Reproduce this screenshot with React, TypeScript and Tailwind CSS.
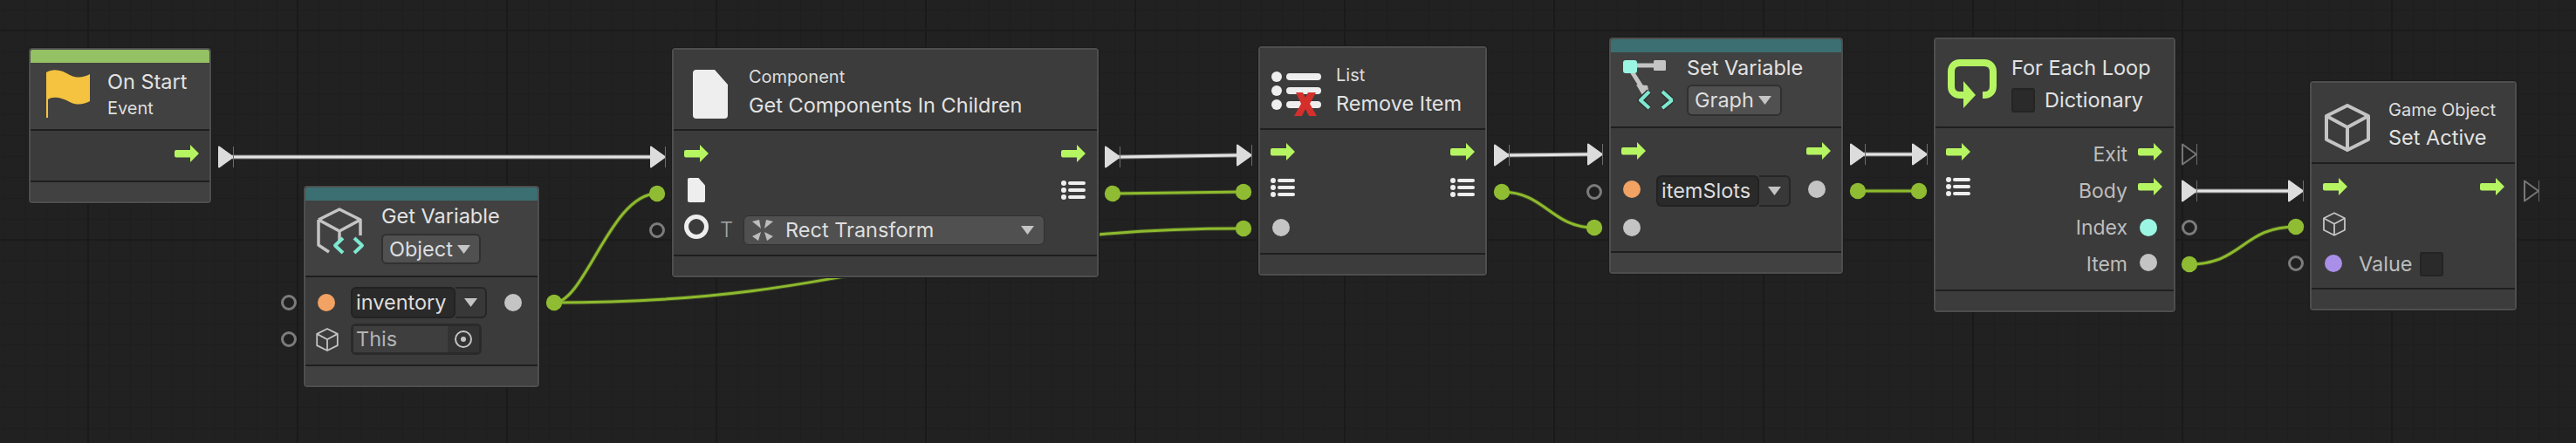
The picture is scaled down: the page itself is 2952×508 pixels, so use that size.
import React from 'react';

const ARROW = '#b6f562';

const ArrowIcon = ({ className = '' }: { className?: string }) => (
  <svg width="28" height="20" viewBox="0 0 28 20" className={`shrink-0 ${className}`}>
    <path d="M2 6 H18 V0 L28 10 L18 20 V14.5 H2 Q0 14.5 0 12.5 V8 Q0 6 2 6 Z" fill={ARROW} />
  </svg>
);

const ListIcon = ({ className = '' }: { className?: string }) => (
  <svg width="28" height="22" viewBox="0 0 28 22" className={`shrink-0 ${className}`} fill="#eeeeee">
    <circle cx="3" cy="3" r="3" />
    <circle cx="3" cy="11" r="3" />
    <circle cx="3" cy="19" r="3" />
    <rect x="8" y="1" width="20" height="4" rx="2" />
    <rect x="8" y="9" width="20" height="4" rx="2" />
    <rect x="8" y="17" width="20" height="4" rx="2" />
  </svg>
);

const DocIcon = ({ size = 'big', className = '' }: { size?: 'big' | 'small'; className?: string }) => (
  <svg
    width={size === 'big' ? 40 : 20}
    height={size === 'big' ? 56 : 28}
    viewBox="0 0 40 56"
    className={`shrink-0 ${className}`}
  >
    <path d="M4 0 H25 L40 17 V52 Q40 56 36 56 H4 Q0 56 0 52 V4 Q0 0 4 0 Z" fill="#eeeeee" />
  </svg>
);

const CubeIcon = ({ w, h, sw, className = '' }: { w: number; h: number; sw: number; className?: string }) => (
  <svg width={w} height={h} viewBox="0 0 52 55" className={`shrink-0 ${className}`} fill="none" stroke="#c4c4c4" strokeWidth={sw} strokeLinejoin="round">
    <path d="M26 2 L50 14 V41 L26 53 L2 41 V14 Z" />
    <path d="M2 14 L26 27 L50 14 M26 27 V53" />
  </svg>
);

const Dot = ({ color = 'bg-[#c4c4c4]', className = '' }: { color?: string; className?: string }) => (
  <div className={`w-[20px] h-[20px] rounded-full shrink-0 ${color} ${className}`} />
);

const Caret = ({ className = '' }: { className?: string }) => (
  <svg width="15" height="10" viewBox="0 0 15 10" className={`shrink-0 ${className}`}>
    <path d="M0 0 H15 L7.5 10 Z" fill="#c4c4c4" />
  </svg>
);

const Checkbox = ({ className = '' }: { className?: string }) => (
  <div className={`w-[27px] h-[28px] rounded-[3px] bg-[#2a2a2a] border-2 border-[#242424] shrink-0 ${className}`} />
);

const Dropdown = ({ label, className = '' }: { label: string; className?: string }) => (
  <div className={`flex items-center justify-between h-[35px] pl-[7px] pr-[10px] bg-[#505050] border-2 border-[#303030] rounded-[6px] text-[23.5px] text-[#dedede] ${className}`}>
    {label}
    <Caret />
  </div>
);

const VariableField = ({ label, className = '' }: { label: string; className?: string }) => (
  <div className={`flex h-[36px] shrink-0 ${className}`}>
    <div className="flex-1 flex items-center pl-[4px] bg-[#2a2a2a] border-2 border-[#222222] rounded-[6px] text-[23.5px] text-[#dddddd] pb-[1px]">{label}</div>
    <div className="w-[36px] flex items-center justify-center bg-[#383838] border-2 border-l-0 border-[#262626] rounded-r-[6px]">
      <Caret />
    </div>
  </div>
);

const Row = ({ children, className = '' }: { children: React.ReactNode; className?: string }) => (
  <div className={`flex items-center h-[42px] ${className}`}>{children}</div>
);

type NodeProps = {
  pos: string;
  bar?: string;
  headerClass: string;
  bodyClass: string;
  footTone?: string;
  header: React.ReactNode;
  children: React.ReactNode;
};

const GraphNode = ({ pos, bar, headerClass, bodyClass, footTone = 'bg-[#3c3c3c]', header, children }: NodeProps) => (
  <div className={`absolute flex flex-col rounded-[4px] border-2 border-[#4e4e4e] shadow-[0_0_0_1px_#1b1b1b] overflow-hidden ${pos}`}>
    {bar && <div className={`h-[15px] shrink-0 ${bar}`} />}
    <div className={`flex items-center shrink-0 ${footTone} ${headerClass}`}>{header}</div>
    <div className={`flex-1 border-y-2 border-[#1f1f1f] bg-[#3b3b3b] ${bodyClass}`}>{children}</div>
    <div className={`h-[22px] shrink-0 ${footTone}`} />
  </div>
);

const Title = ({ children }: { children: React.ReactNode }) => (
  <div className="text-[23.5px] leading-[26px] text-[#e2e2e2] whitespace-nowrap">{children}</div>
);

const Sub = ({ children, className = '' }: { children: React.ReactNode; className?: string }) => (
  <div className={`text-[20px] leading-[24px] text-[#dedede] whitespace-nowrap ${className}`}>{children}</div>
);

const Label = ({ children }: { children: React.ReactNode }) => (
  <span className="text-[23px] text-[#bdbdbd] whitespace-nowrap">{children}</span>
);

// canvas ports and wires, everything here sits behind the nodes
const Flow = ({ x, y, on }: { x: number; y: number; on: boolean }) => (
  <g>
    <path
      d={`M${x + 1} ${y - 11.5} L${x + 17} ${y} L${x + 1} ${y + 11.5} Z`}
      fill={on ? '#dcdcdc' : '#202020'}
      stroke={on ? '#dcdcdc' : '#777777'}
      strokeWidth="2"
      strokeLinejoin="round"
    />
    <path d={`M${x + 17.5} ${y - 12} V${y + 12}`} stroke="#6c6c6c" strokeWidth="1" />
  </g>
);

const Hollow = ({ x, y }: { x: number; y: number }) => (
  <circle cx={x} cy={y} r="7.5" fill="#202020" stroke="#7c7c7c" strokeWidth="3" />
);

const Filled = ({ x, y }: { x: number; y: number }) => (
  <circle cx={x} cy={y} r="9.2" fill="#8fbc33" />
);

const Wire = ({ d }: { d: string }) => (
  <g fill="none">
    <path d={d} stroke="#8fbc33" strokeOpacity="0.25" strokeWidth="5" />
    <path d={d} stroke="#8ebb2e" strokeWidth="3" />
  </g>
);

const FlowWire = ({ x1, x2, y1, y2 }: { x1: number; x2: number; y1: number; y2: number }) => (
  <g fill="none">
    <path d={`M${x1} ${y1} L${x2} ${y2}`} stroke="#777777" strokeWidth="5" />
    <path d={`M${x1} ${y1} L${x2} ${y2}`} stroke="#e4e4e4" strokeWidth="3" />
  </g>
);

const Canvas = () => (
  <svg width="2952" height="508" viewBox="0 0 2952 508" className="absolute left-0 top-0">
    <Wire d="M635 347 C670 347 700 222 753 222" />
    <Wire d="M635 347 C1000 347 1060 262 1425 262" />
    <Wire d="M1275 222 L1425 220" />
    <Wire d="M1721 220 C1770 220 1778 261 1827 261" />
    <Wire d="M2129 219 L2199 219" />
    <Wire d="M2509 303 C2570 303 2570 260 2631 260" />

    <FlowWire x1={266} x2={746} y1={180} y2={180} />
    <FlowWire x1={1282} x2={1418} y1={180} y2={178} />
    <FlowWire x1={1728} x2={1820} y1={178} y2={177} />
    <FlowWire x1={2136} x2={2192} y1={177} y2={177} />
    <FlowWire x1={2516} x2={2624} y1={219} y2={219} />

    <Flow x={250} y={180} on />
    <Flow x={745} y={180} on />
    <Flow x={1266} y={180} on />
    <Flow x={1417} y={178} on />
    <Flow x={1712} y={178} on />
    <Flow x={1819} y={177} on />
    <Flow x={2120} y={177} on />
    <Flow x={2191} y={177} on />
    <Flow x={2500} y={177} on={false} />
    <Flow x={2500} y={219} on />
    <Flow x={2622} y={219} on />
    <Flow x={2892} y={219} on={false} />

    <Hollow x={331} y={347} />
    <Hollow x={331} y={389} />
    <Filled x={635} y={347} />
    <Filled x={753} y={222} />
    <Hollow x={753} y={264} />
    <Filled x={1275} y={222} />
    <Filled x={1425} y={220} />
    <Filled x={1425} y={262} />
    <Filled x={1721} y={220} />
    <Hollow x={1827} y={220} />
    <Filled x={1827} y={261} />
    <Filled x={2129} y={219} />
    <Filled x={2199} y={219} />
    <Hollow x={2509} y={261} />
    <Filled x={2509} y={303} />
    <Filled x={2631} y={260} />
    <Hollow x={2631} y={302} />
  </svg>
);

const App: React.FC = () => {
  return (
    <div className="relative w-[2952px] h-[508px] overflow-hidden bg-[#212121] font-['Inter',sans-serif] [background-image:linear-gradient(#1b1b1b_2px,transparent_2px),linear-gradient(90deg,#1a1a1a_2px,transparent_2px),linear-gradient(#1e1e1e_1px,transparent_1px),linear-gradient(90deg,#1e1e1e_1px,transparent_1px)] [background-size:240px_240px,240px_240px,24px_24px,24px_24px] [background-position:0_34px,100px_0,0_11px,5px_0]">
      <Canvas />

      {/* On Start */}
      <GraphNode
        pos="left-[33px] top-[55px] w-[209px] h-[178px]"
        bar="bg-[#93c163]"
        footTone="bg-[#414141]"
        headerClass="h-[76px] pl-[18px] gap-[20px]"
        bodyClass="flex justify-end pr-[12px] pt-[16px]"
        header={
          <>
            <svg width="50" height="55" viewBox="0 0 50 55" className="shrink-0 mb-[5px]">
              <path d="M0 3 C8 -2 18 0 27 6 C35 10 43 9 50 5 V36 C43 40 35 41 27 37 C18 32 8 30 2 34 V55 H0 Z" fill="#f5c33f" />
            </svg>
            <div className="flex flex-col gap-[5px] pb-[4px]">
              <Title>On Start</Title>
              <Sub>Event</Sub>
            </div>
          </>
        }
      >
        <ArrowIcon />
      </GraphNode>

      {/* Get Variable */}
      <GraphNode
        pos="left-[348px] top-[213px] w-[270px] h-[231px]"
        bar="bg-[#3b6f72]"
        footTone="bg-[#414141]"
        headerClass="h-[86px] pl-[12px] gap-[15px]"
        bodyClass="flex flex-col gap-[6px] pt-[11px] pl-[14px]"
        header={
          <>
            <svg width="60" height="58" viewBox="0 0 60 58" className="shrink-0 mb-[14px]" fill="none" strokeLinejoin="round">
              <g stroke="#c4c4c4" strokeWidth="3.5">
                <path d="M3 15 L27 3 L51 15 V33 M3 15 V44 L15 52 M3 15 L27 28 L51 15 M27 28 V40" />
              </g>
              <g stroke="#7de8d0" strokeWidth="4">
                <path d="M31 36 L22 44.5 L31 53 M44 36 L53 44.5 L44 53" />
              </g>
            </svg>
            <div className="flex flex-col items-start gap-[7px] pb-[8px]">
              <Title>Get Variable</Title>
              <Dropdown label="Object" className="w-[114px]" />
            </div>
          </>
        }
      >
        <div className="flex items-center">
          <Dot color="bg-[#f2a263]" />
          <VariableField label="inventory" className="w-[156px] ml-[18px]" />
          <Dot className="ml-[20px]" />
        </div>
        <div className="flex items-center">
          <CubeIcon w={26} h={27} sw={3.6} className="-ml-[2px] mr-[14px]" />
          <div className="flex w-[150px] h-[36px] bg-[#2a2a2a] border-[3px] border-[#2a2a2a] rounded-[6px]">
            <div className="flex-1 flex items-center pl-[3px] bg-[#3e3e3e] text-[23.5px] text-[#b4b4b4]">This</div>
            <div className="w-[36px] flex items-center justify-center bg-[#333333]">
              <svg width="22" height="22" viewBox="0 0 22 22" fill="none">
                <circle cx="11" cy="11" r="9" stroke="#c4c4c4" strokeWidth="2" />
                <circle cx="11" cy="11" r="3" fill="#c4c4c4" />
              </svg>
            </div>
          </div>
        </div>
      </GraphNode>

      {/* Get Components In Children */}
      <GraphNode
        pos="left-[770px] top-[55px] w-[489px] h-[263px]"
        headerClass="h-[91px] pl-[22px] gap-[24px]"
        bodyClass="pt-[9px] pl-[12px] pr-[13px]"
        header={
          <>
            <DocIcon className="mt-[11px]" />
            <div className="flex flex-col gap-[8px] pt-[4px]">
              <Sub>Component</Sub>
              <Title>Get Components In Children</Title>
            </div>
          </>
        }
      >
        <Row className="justify-between">
          <ArrowIcon className="mb-[8px]" />
          <ArrowIcon className="mb-[8px]" />
        </Row>
        <Row className="justify-between">
          <DocIcon size="small" className="ml-[4px] mb-[8px]" />
          <ListIcon className="mb-[8px]" />
        </Row>
        <Row>
          <svg width="28" height="28" viewBox="0 0 28 28" className="shrink-0 mb-[8px]" fill="none">
            <circle cx="14" cy="14" r="11.5" stroke="#eeeeee" strokeWidth="5" />
          </svg>
          <span className="ml-[13px] w-[14px] text-[24px] font-light text-[#a4a4a4]">T</span>
          <div className="flex items-center ml-[13px] w-[345px] h-[34px] pl-[8px] pr-[11px] bg-[#505050] border border-[#303030] rounded-[6px] text-[23.5px] text-[#dedede]">
            <svg width="26" height="26" viewBox="0 0 26 26" className="shrink-0 mr-[13px]" fill="#bdbdbd">
              <path d="M1 3 L9 1 L11 11 Z M25 3 L17 1 L15 11 Z" />
              <path d="M1 20 L11 15 L8 25 Z M25 20 L15 15 L18 25 Z" />
            </svg>
            Rect Transform
            <Caret className="ml-auto" />
          </div>
        </Row>
      </GraphNode>

      {/* Remove Item */}
      <GraphNode
        pos="left-[1442px] top-[53px] w-[262px] h-[263px]"
        headerClass="h-[92px] pl-[13px] gap-[17px]"
        bodyClass="pt-[8px] pl-[12px] pr-[12px]"
        header={
          <>
            <svg width="57" height="51" viewBox="0 0 57 51" className="shrink-0 mt-[13px]">
              <g fill="#eeeeee">
                <circle cx="6" cy="6" r="6" />
                <circle cx="6" cy="22" r="6" />
                <circle cx="6" cy="38" r="6" />
                <rect x="17" y="2" width="40" height="8" rx="4" />
                <rect x="17" y="18" width="40" height="8" rx="4" />
                <rect x="17" y="34" width="40" height="8" rx="4" />
              </g>
              <path d="M28 24 H36 L39 30 L42 24 H51 L44 37 L52 51 H43 L39 43 L35 51 H26 L34 37 Z" fill="#d42f2a" />
            </svg>
            <div className="flex flex-col gap-[8px] pt-[3px]">
              <Sub>List</Sub>
              <Title>Remove Item</Title>
            </div>
          </>
        }
      >
        <Row className="justify-between">
          <ArrowIcon className="mb-[8px]" />
          <ArrowIcon className="mb-[8px]" />
        </Row>
        <Row className="justify-between">
          <ListIcon className="mb-[10px]" />
          <ListIcon className="mb-[10px]" />
        </Row>
        <Row>
          <Dot className="ml-[2px] mb-[2px]" />
        </Row>
      </GraphNode>

      {/* Set Variable */}
      <GraphNode
        pos="left-[1844px] top-[43px] w-[268px] h-[271px]"
        bar="bg-[#3b6f72]"
        footTone="bg-[#414141]"
        headerClass="h-[85px] pl-[11px] gap-[16px]"
        bodyClass="pt-[9px] pl-[12px] pr-[12px]"
        header={
          <>
            <svg width="60" height="60" viewBox="0 0 60 60" className="shrink-0 mb-[11px]" fill="none">
              <path d="M11 8 H40 M11 12 L25 34" stroke="#c4c4c4" strokeWidth="5" />
              <rect x="38" y="2" width="14" height="12" rx="1.5" fill="#c4c4c4" />
              <path d="M18 30 L31 31 L32 36 L25 42 Z" fill="#c4c4c4" />
              <rect x="3" y="2" width="16" height="15" rx="3" fill="#9af5e2" />
              <path d="M33 38 L23 48 L33 57 M48 38 L59 48 L48 57" stroke="#323232" strokeWidth="7" strokeLinejoin="round" />
              <path d="M33 38 L23 48 L33 57 M48 38 L59 48 L48 57" stroke="#7de8d0" strokeWidth="4" strokeLinejoin="round" />
            </svg>
            <div className="flex flex-col items-start gap-[6px] pb-[7px]">
              <Title>Set Variable</Title>
              <Dropdown label="Graph" className="h-[36px] w-[109px]" />
            </div>
          </>
        }
      >
        <Row className="justify-between">
          <ArrowIcon className="mb-[8px]" />
          <ArrowIcon className="mb-[8px]" />
        </Row>
        <Row className="pl-[2px]">
          <Dot color="bg-[#f2a263]" className="mb-[4px]" />
          <VariableField label="itemSlots" className="w-[154px] ml-[18px]" />
          <Dot className="ml-[20px] mb-[4px]" />
        </Row>
        <Row className="pl-[2px]">
          <Dot />
        </Row>
      </GraphNode>

      {/* For Each Loop */}
      <GraphNode
        pos="left-[2216px] top-[43px] w-[277px] h-[315px]"
        headerClass="h-[100px] pl-[14px] gap-[17px]"
        bodyClass="pt-[9px] pl-[12px] pr-[13px]"
        header={
          <>
            <svg width="56" height="56" viewBox="0 0 56 56" className="shrink-0 mt-[2px]">
              <path
                d="M18 41 H14 C8 41 4 37 4 31 V14 C4 8 8 4 14 4 H42 C48 4 52 8 52 14 V31 C52 37 48 41 42 41 H40"
                fill="none"
                stroke="#b6f562"
                strokeWidth="8"
              />
              <path d="M18 25 L32 41 L18 56 Z" fill="#b6f562" />
            </svg>
            <div className="flex flex-col gap-[10px] pt-[4px]">
              <Title>For Each Loop</Title>
              <div className="flex items-center gap-[11px] h-[28px]">
                <Checkbox />
                <span className="text-[23.5px] text-[#e2e2e2]">Dictionary</span>
              </div>
            </div>
          </>
        }
      >
        <Row className="justify-between">
          <ArrowIcon className="mb-[6px]" />
          <div className="flex items-center gap-[12px]">
            <Label>Exit</Label>
            <ArrowIcon className="mb-[6px]" />
          </div>
        </Row>
        <Row className="justify-between">
          <ListIcon className="mb-[10px]" />
          <div className="flex items-center gap-[12px]">
            <Label>Body</Label>
            <ArrowIcon className="mb-[10px]" />
          </div>
        </Row>
        <Row className="justify-end pr-[6px] gap-[14px]">
          <Label>Index</Label>
          <Dot color="bg-[#9bf7e3]" />
        </Row>
        <Row className="justify-end pr-[6px] gap-[14px]">
          <Label>Item</Label>
          <Dot className="mb-[4px]" />
        </Row>
      </GraphNode>

      {/* Set Active */}
      <GraphNode
        pos="left-[2647px] top-[93px] w-[237px] h-[263px]"
        headerClass="h-[91px] pl-[15px] gap-[21px]"
        bodyClass="pt-[10px] pl-[13px] pr-[12px]"
        header={
          <>
            <CubeIcon w={52} h={55} sw={4} className="mt-[12px]" />
            <div className="flex flex-col gap-[7px] pt-[3px]">
              <Sub>Game Object</Sub>
              <Title>Set Active</Title>
            </div>
          </>
        }
      >
        <Row className="justify-between">
          <ArrowIcon className="mb-[10px]" />
          <ArrowIcon className="mb-[10px]" />
        </Row>
        <Row>
          <CubeIcon w={26} h={28} sw={3.6} className="mb-[9px]" />
        </Row>
        <Row className="pl-[2px]">
          <Dot color="bg-[#a98fe8]" className="mb-[2px]" />
          <span className="ml-[19px] text-[23.5px] text-[#bdbdbd]">Value</span>
          <Checkbox className="ml-[8px]" />
        </Row>
      </GraphNode>
    </div>
  );
};

export default App;
